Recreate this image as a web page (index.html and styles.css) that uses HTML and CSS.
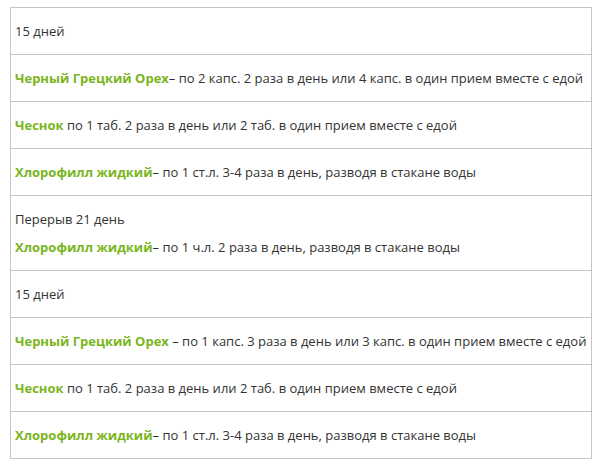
FILE: index.html
```html
<!DOCTYPE html>
<html lang="ru">
<head>
  <meta charset="UTF-8">
  <title>Схема приема</title>
  <link rel="stylesheet" href="styles.css">
</head>
<body>
  <div class="container">
    <table class="schedule">
      <tr><td><p>15 дней</p></td></tr>
      <tr><td><p><b class="product">Черный Грецкий Орех</b>– по 2 капс. 2 раза в день или 4 капс. в один прием вместе с едой</p></td></tr>
      <tr><td><p><b class="product">Чеснок</b> по 1 таб. 2 раза в день или 2 таб. в один прием вместе с едой</p></td></tr>
      <tr><td><p><b class="product">Хлорофилл жидкий</b>– по 1 ст.л. 3-4 раза в день, разводя в стакане воды</p></td></tr>
      <tr><td>
        <p>Перерыв 21 день</p>
        <p><b class="product">Хлорофилл жидкий</b>– по 1 ч.л. 2 раза в день, разводя в стакане воды</p>
      </td></tr>
      <tr><td><p>15 дней</p></td></tr>
      <tr><td><p><b class="product">Черный Грецкий Орех</b> – по 1 капс. 3 раза в день или 3 капс. в один прием вместе с едой</p></td></tr>
      <tr><td><p><b class="product">Чеснок</b> по 1 таб. 2 раза в день или 2 таб. в один прием вместе с едой</p></td></tr>
      <tr><td><p><b class="product">Хлорофилл жидкий</b>– по 1 ст.л. 3-4 раза в день, разводя в стакане воды</p></td></tr>
    </table>
  </div>
</body>
</html>
```

FILE: styles.css
```css
body {
  margin: 0;
  background: #fff;
  font-family: "Open Sans", "Liberation Sans", sans-serif;
  font-size: 13px;
  color: #333;
}

.container {
  padding: 7px 16px 0 10px;
}

.schedule {
  width: 100%;
  border-collapse: collapse;
}

.schedule td {
  border: 1px solid #c4c4c4;
  padding: 14px 4px;
  text-align: left;
}

.schedule p {
  margin: 0 0 10px;
  line-height: 18px;
}

.schedule p:last-child {
  margin-bottom: 0;
}

.product {
  color: #7ab51d;
  font-weight: 700;
}
```
